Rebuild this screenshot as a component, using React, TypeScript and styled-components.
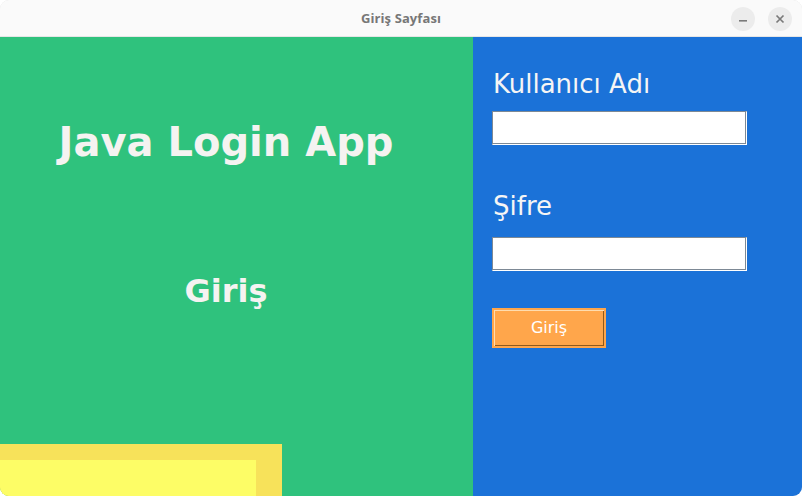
import React from "react";
import styled, { createGlobalStyle } from "styled-components";

const Global = createGlobalStyle`
  html, body { margin: 0; padding: 0; background: #ffffff; }
  body { width: 802px; height: 496px; overflow: hidden; font-family: "DejaVu Sans", sans-serif; }
  * { box-sizing: border-box; }
`;

const Window = styled.div`
  width: 802px;
  height: 496px;
  display: flex;
  flex-direction: column;
  border-radius: 9px;
  overflow: hidden;
  background: #fafafa;
  box-shadow: inset 0 0 0 1px #e2e2e2;
`;

const TitleBar = styled.div`
  height: 37px;
  flex: none;
  position: relative;
  display: flex;
  align-items: center;
  justify-content: center;
  background: #fafafa;
  border-bottom: 1px solid #e6e6e6;
`;

const Title = styled.div`
  font-family: "Open Sans", "Noto Sans", sans-serif;
  font-weight: 700;
  font-size: 13px;
  color: #777777;
  letter-spacing: 0.1px;
`;

const Controls = styled.div`
  position: absolute;
  right: 10px;
  top: 7px;
  display: flex;
  gap: 13px;
`;

const CircleBtn = styled.div`
  width: 24px;
  height: 24px;
  border-radius: 50%;
  background: #ececec;
  display: flex;
  align-items: center;
  justify-content: center;
`;

const Content = styled.div`
  flex: 1;
  display: flex;
  min-height: 0;
`;

const GreenPanel = styled.div`
  width: 473px;
  flex: none;
  background: #2fc27d;
  display: flex;
  flex-direction: column;
`;

const Headline = styled.div`
  width: 452px;
  margin-top: 85px;
  text-align: center;
  font-weight: 700;
  font-size: 40px;
  line-height: 40px;
  color: #f5f3f1;
`;

const SubHead = styled.div`
  width: 452px;
  margin-top: 113px;
  text-align: center;
  font-weight: 700;
  font-size: 32px;
  line-height: 32px;
  color: #f5f3f1;
`;

const YellowOuter = styled.div`
  margin-top: auto;
  width: 282px;
  height: 52px;
  background: #f7e25a;
  display: flex;
  align-items: flex-end;
`;

const YellowInner = styled.div`
  width: 256px;
  height: 36px;
  background: #fdfd66;
`;

const BluePanel = styled.div`
  flex: 1;
  background: #1b72d8;
  padding: 34px 0 0 19px;
  display: flex;
  flex-direction: column;
  align-items: flex-start;
`;

const Label = styled.div<{ $mt: number }>`
  margin-top: ${(p) => p.$mt}px;
  padding-left: 1px;
  font-size: 26px;
  line-height: 26px;
  color: #f5f5f5;
`;

const Field = styled.input<{ $mt: number }>`
  margin-top: ${(p) => p.$mt}px;
  width: 255px;
  height: 34px;
  background: #ffffff;
  border: 1px solid;
  border-color: #7d8995 #ffffff #ffffff #7d8995;
  box-shadow: inset -1px -1px 0 #7d8995, inset 1px 1px 0 #ffffff;
  outline: none;
  padding: 0 4px;
  font-family: "DejaVu Sans", sans-serif;
  font-size: 14px;
`;

const Button = styled.button`
  margin-top: 37px;
  width: 114px;
  height: 40px;
  background: #ffa64b;
  border: 2px solid #ffa64b;
  box-shadow: inset 1px 1px 0 #ffdcae, inset -1px -1px 0 #8f5a1e;
  padding: 0 0 2px;
  color: #ffffff;
  font-family: "DejaVu Sans", sans-serif;
  font-size: 16px;
  cursor: pointer;
`;

export default function App() {
  return (
    <>
      <Global />
      <Window>
        <TitleBar>
          <Title>Giriş Sayfası</Title>
          <Controls>
            <CircleBtn>
              <svg width="10" height="10" viewBox="0 0 10 10">
                <rect x="1" y="6" width="8" height="1.6" fill="#7a7a7a" />
              </svg>
            </CircleBtn>
            <CircleBtn>
              <svg width="10" height="10" viewBox="0 0 10 10">
                <path d="M1.5 1.5 L8.5 8.5 M8.5 1.5 L1.5 8.5" stroke="#7a7a7a" strokeWidth="1.7" />
              </svg>
            </CircleBtn>
          </Controls>
        </TitleBar>
        <Content>
          <GreenPanel>
            <Headline>Java Login App</Headline>
            <SubHead>Giriş</SubHead>
            <YellowOuter>
              <YellowInner />
            </YellowOuter>
          </GreenPanel>
          <BluePanel>
            <Label $mt={0}>Kullanıcı Adı</Label>
            <Field $mt={14} type="text" />
            <Label $mt={48}>Şifre</Label>
            <Field $mt={18} type="password" />
            <Button>Giriş</Button>
          </BluePanel>
        </Content>
      </Window>
    </>
  );
}
